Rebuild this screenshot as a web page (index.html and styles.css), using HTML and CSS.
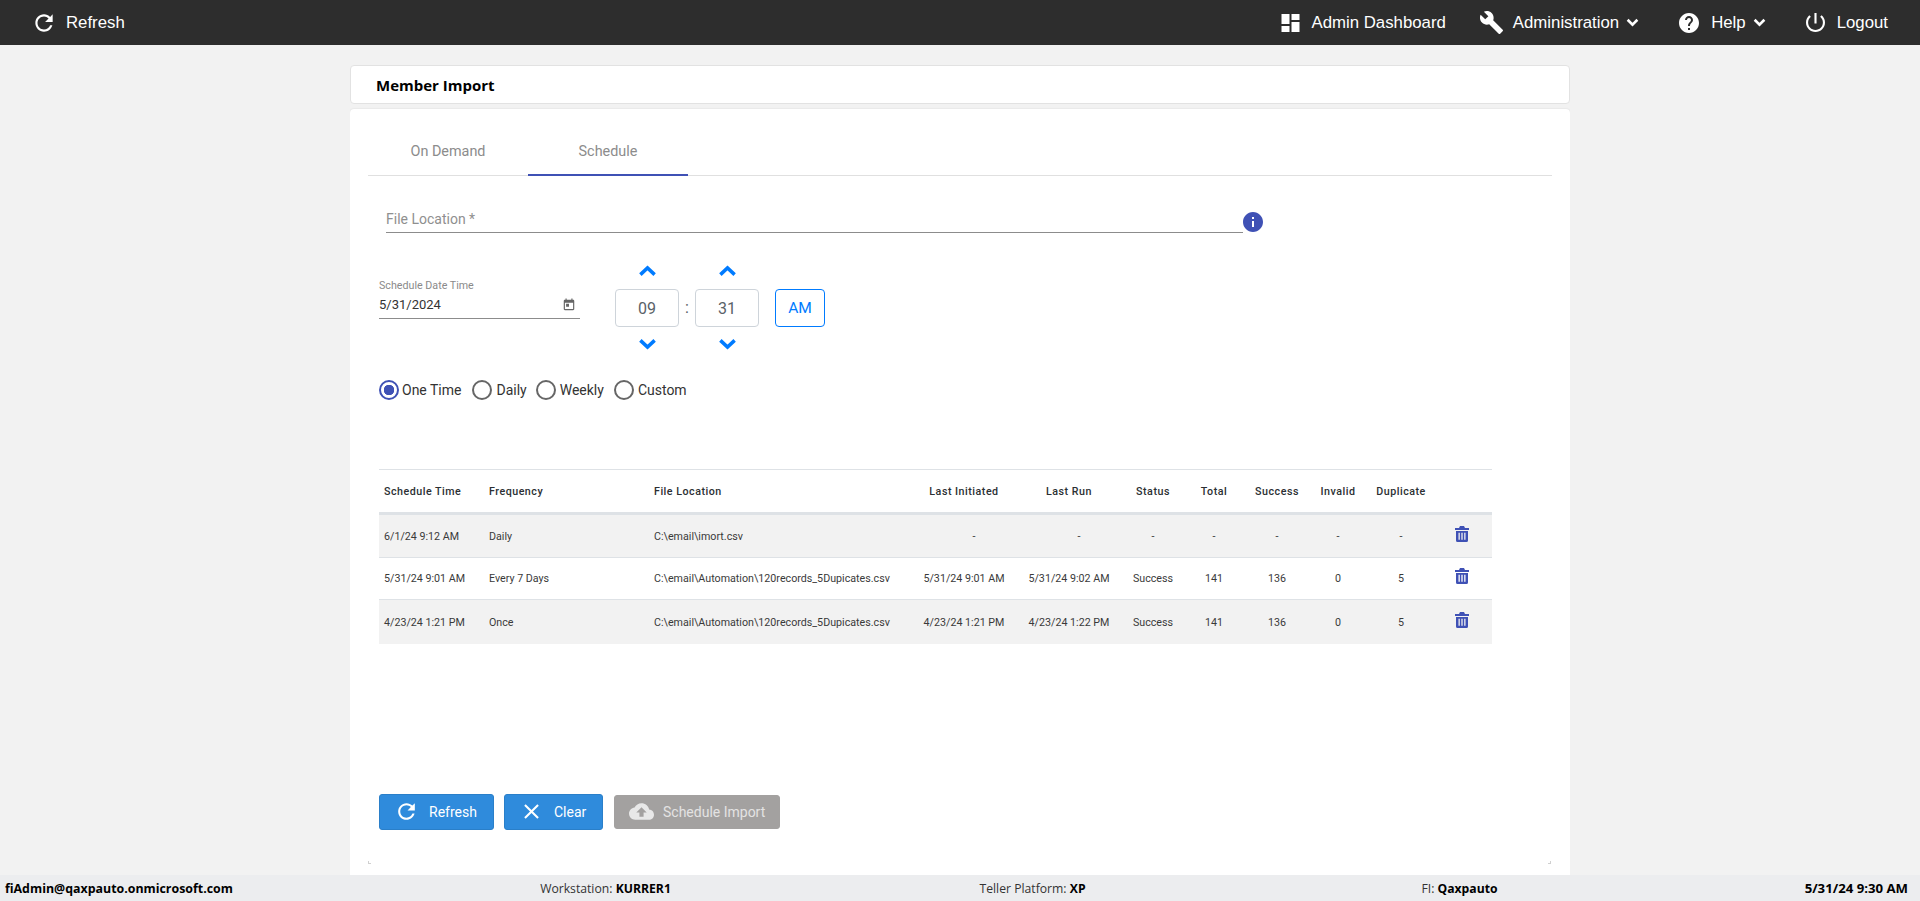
FILE: index.html
```html
<!DOCTYPE html>
<html lang="en">
<head>
<meta charset="utf-8">
<title>Member Import</title>
<link rel="stylesheet" href="styles.css">
</head>
<body>
<header class="topbar">
  <a class="nav-item nav-refresh"><svg class="nav-icon" viewBox="0 0 24 24"><path d="M17.65 6.35C16.2 4.9 14.21 4 12 4c-4.42 0-7.99 3.58-7.99 8s3.57 8 7.99 8c3.73 0 6.84-2.55 7.73-6h-2.08c-.82 2.33-3.04 4-5.65 4-3.31 0-6-2.69-6-6s2.69-6 6-6c1.66 0 3.14.69 4.22 1.78L13 11h7V4l-2.35 2.35z"/></svg><span>Refresh</span></a>
  <nav class="nav-right">
    <a class="nav-item nav-dash"><svg class="nav-icon" viewBox="3 3 18 18"><path d="M3 13h8V3H3v10zm0 8h8v-6H3v6zm10 0h8V11h-8v10zm0-18v6h8V3h-8z"/></svg><span>Admin Dashboard</span></a>
    <a class="nav-item nav-admin"><svg class="nav-icon nav-icon-wrench" viewBox="1 1 22 22"><path d="M22.7 19l-9.1-9.1c.9-2.3.4-5-1.5-6.9-2-2-5-2.4-7.4-1.3L9 6 6 9 1.6 4.7C.4 7.1.9 10.1 2.9 12.1c1.9 1.9 4.6 2.4 6.9 1.5l9.1 9.1c.4.4 1 .4 1.4 0l2.3-2.3c.5-.4.5-1.1.1-1.4z"/></svg><span>Administration</span><svg class="nav-caret" viewBox="0 0 12 8"><path d="M1.5 1.5 6 6l4.5-4.5"/></svg></a>
    <a class="nav-item nav-help"><svg class="nav-icon nav-icon-help" viewBox="2 2 20 20"><path d="M12 2C6.48 2 2 6.48 2 12s4.48 10 10 10 10-4.48 10-10S17.52 2 12 2zm1 17h-2v-2h2v2zm2.07-7.75l-.9.92C13.45 12.9 13 13.5 13 15h-2v-.5c0-1.1.45-2.1 1.17-2.83l1.24-1.26c.37-.36.59-.86.59-1.41 0-1.1-.9-2-2-2s-2 .9-2 2H8c0-2.21 1.79-4 4-4s4 1.79 4 4c0 .88-.36 1.68-.93 2.25z"/></svg><span>Help</span><svg class="nav-caret" viewBox="0 0 12 8"><path d="M1.5 1.5 6 6l4.5-4.5"/></svg></a>
    <a class="nav-item nav-logout"><svg class="nav-icon" viewBox="3 3 18 18"><path d="M13 3h-2v10h2V3zm4.83 2.17l-1.42 1.42C17.99 7.86 19 9.81 19 12c0 3.87-3.13 7-7 7s-7-3.13-7-7c0-2.19 1.01-4.14 2.58-5.42L6.17 5.17C4.23 6.82 3 9.26 3 12c0 4.97 4.03 9 9 9s9-4.03 9-9c0-2.74-1.23-5.18-3.17-6.83z"/></svg><span>Logout</span></a>
  </nav>
</header>

<main class="page">
  <div class="title-card"><h1 class="title">Member Import</h1></div>
  <section class="card">
    <span class="corner corner-left"></span>
    <span class="corner corner-right"></span>
    <div class="tabs">
      <div class="tab">On Demand</div>
      <div class="tab tab-active">Schedule</div>
    </div>

    <div class="file-row">
      <div class="file-field">File Location *</div>
      <svg class="info-icon" viewBox="2 2 20 20"><path d="M12 2C6.48 2 2 6.48 2 12s4.48 10 10 10 10-4.48 10-10S17.52 2 12 2zm1 15h-2v-6h2v6zm0-8h-2V7h2v2z"/></svg>
    </div>

    <div class="schedule-row">
      <div class="date-field">
        <div class="date-label">Schedule Date Time</div>
        <div class="date-value"><span>5/31/2024</span><svg class="cal-icon" viewBox="0 0 24 24"><path d="M19 3h-1V1h-2v2H8V1H6v2H5c-1.11 0-1.99.9-1.99 2L3 19c0 1.1.89 2 2 2h14c1.1 0 2-.9 2-2V5c0-1.1-.9-2-2-2zm0 16H5V8h14v11zM7 10h5v5H7z"/></svg></div>
      </div>
      <div class="time-picker">
        <div class="spinner">
          <svg class="chev" viewBox="0 0 16 10"><path d="M2 8l6-5.500 6 5.500"/></svg>
          <div class="time-box">09</div>
          <svg class="chev" viewBox="0 0 16 10"><path d="M2 2l6 5.500 6-5.500"/></svg>
        </div>
        <div class="time-sep">:</div>
        <div class="spinner">
          <svg class="chev" viewBox="0 0 16 10"><path d="M2 8l6-5.500 6 5.500"/></svg>
          <div class="time-box">31</div>
          <svg class="chev" viewBox="0 0 16 10"><path d="M2 2l6 5.500 6-5.500"/></svg>
        </div>
        <div class="ampm">AM</div>
      </div>
    </div>

    <div class="radios">
      <div class="radio-item radio-item-first"><span class="radio radio-on"></span><span>One Time</span></div>
      <div class="radio-item"><span class="radio"></span><span>Daily</span></div>
      <div class="radio-item"><span class="radio"></span><span>Weekly</span></div>
      <div class="radio-item"><span class="radio"></span><span>Custom</span></div>
    </div>

    <table class="grid">
      <colgroup>
        <col class="c1"><col class="c2"><col class="c3"><col class="c4"><col class="c5"><col class="c6"><col class="c7"><col class="c8"><col class="c9"><col class="c10"><col class="c11">
      </colgroup>
      <thead>
        <tr>
          <th class="left first">Schedule Time</th><th class="left">Frequency</th><th class="left">File Location</th><th>Last Initiated</th><th>Last Run</th><th>Status</th><th>Total</th><th>Success</th><th>Invalid</th><th>Duplicate</th><th></th>
        </tr>
      </thead>
      <tbody>
        <tr class="row-a">
          <td class="left">6/1/24 9:12 AM</td><td class="left">Daily</td><td class="left">C:\email\imort.csv</td><td class="dash-shift">-</td><td class="dash-shift">-</td><td>-</td><td>-</td><td>-</td><td>-</td><td>-</td>
          <td><svg class="trash" viewBox="0 0 14 16"><path fill-rule="evenodd" d="M5 0h4l1 2h4v2H0V2h4zM1 5h12v9.500A1.500 1.500 0 0 1 11.500 16h-9A1.500 1.500 0 0 1 1 14.500zm2.500 1.800v7h1.300v-7zm2.850 0v7h1.300v-7zm2.850 0v7h1.300v-7z"/></svg></td>
        </tr>
        <tr class="row-b">
          <td class="left">5/31/24 9:01 AM</td><td class="left">Every 7 Days</td><td class="left">C:\email\Automation\120records_5Dupicates.csv</td><td>5/31/24 9:01 AM</td><td>5/31/24 9:02 AM</td><td>Success</td><td>141</td><td>136</td><td>0</td><td>5</td>
          <td><svg class="trash" viewBox="0 0 14 16"><path fill-rule="evenodd" d="M5 0h4l1 2h4v2H0V2h4zM1 5h12v9.500A1.500 1.500 0 0 1 11.500 16h-9A1.500 1.500 0 0 1 1 14.500zm2.500 1.800v7h1.300v-7zm2.850 0v7h1.300v-7zm2.850 0v7h1.300v-7z"/></svg></td>
        </tr>
        <tr class="row-c">
          <td class="left">4/23/24 1:21 PM</td><td class="left">Once</td><td class="left">C:\email\Automation\120records_5Dupicates.csv</td><td>4/23/24 1:21 PM</td><td>4/23/24 1:22 PM</td><td>Success</td><td>141</td><td>136</td><td>0</td><td>5</td>
          <td><svg class="trash" viewBox="0 0 14 16"><path fill-rule="evenodd" d="M5 0h4l1 2h4v2H0V2h4zM1 5h12v9.500A1.500 1.500 0 0 1 11.500 16h-9A1.500 1.500 0 0 1 1 14.500zm2.500 1.800v7h1.300v-7zm2.850 0v7h1.300v-7zm2.850 0v7h1.300v-7z"/></svg></td>
        </tr>
      </tbody>
    </table>

    <div class="actions">
      <button class="btn btn-refresh"><svg class="btn-icon" viewBox="0 0 24 24"><path d="M17.65 6.35C16.2 4.9 14.21 4 12 4c-4.420 0-7.990 3.580-7.990 8s3.570 8 7.990 8c3.730 0 6.840-2.550 7.730-6h-2.080c-.82 2.330-3.040 4-5.650 4-3.310 0-6-2.690-6-6s2.690-6 6-6c1.660 0 3.140.69 4.220 1.780L13 11h7V4l-2.350 2.350z"/></svg>Refresh</button>
      <button class="btn btn-clear"><svg class="btn-icon" viewBox="0 0 24 24"><path d="M19 6.410L17.590 5 12 10.590 6.410 5 5 6.410 10.590 12 5 17.590 6.410 19 12 13.410 17.590 19 19 17.590 13.410 12z"/></svg>Clear</button>
      <button class="btn btn-disabled"><svg class="btn-icon btn-icon-cloud" viewBox="0 0 24 24"><path d="M19.350 10.040C18.670 6.590 15.640 4 12 4 9.110 4 6.600 5.640 5.350 8.040 2.340 8.360 0 10.910 0 14c0 3.310 2.690 6 6 6h13c2.760 0 5-2.240 5-5 0-2.640-2.050-4.780-4.650-4.960zM14 13v4h-4v-4H7l5-5 5 5h-3z"/></svg>Schedule Import</button>
    </div>
  </section>
</main>

<footer class="statusbar">
  <div class="st st-left"><b>fiAdmin@qaxpauto.onmicrosoft.com</b></div>
  <div class="st">Workstation: <b>KURRER1</b></div>
  <div class="st">Teller Platform: <b>XP</b></div>
  <div class="st">FI: <b>Qaxpauto</b></div>
  <div class="st st-right"><b>5/31/24 9:30 AM</b></div>
</footer>
</body>
</html>
```

FILE: styles.css
```css
* { box-sizing: border-box; }
html, body { margin: 0; height: 901px; overflow: hidden; }
body {
  display: flex;
  flex-direction: column;
  background: #f2f2f2;
  font-family: Roboto, "Liberation Sans", sans-serif;
  color: #212529;
}

/* top bar */
.topbar {
  flex: none;
  height: 45px;
  background: #2d2d2d;
  color: #fff;
  display: flex;
  align-items: center;
  justify-content: space-between;
  padding: 0 32px 0 35px;
  font-family: "Liberation Sans", Arial, sans-serif;
  font-size: 16.800px;
}
.nav-right { display: flex; align-items: center; }
.nav-item { display: flex; align-items: center; }
.nav-icon { width: 18px; height: 18px; fill: #fff; margin-right: 13px; }
.nav-refresh .nav-icon { width: 26px; height: 26px; margin-right: 9px; margin-left: -4px; }
.nav-dash { margin-right: 34px; }
.nav-dash .nav-icon { width: 19px; height: 18px; margin-right: 12px; }
.nav-admin { margin-right: 40px; }
.nav-icon-wrench { width: 23px; height: 23px; margin-right: 10px; }
.nav-help { margin-right: 40px; }
.nav-icon-help { width: 20px; height: 20px; margin-right: 12px; }
.nav-logout .nav-icon { width: 19px; height: 19px; margin-right: 12px; }
.nav-caret { width: 13px; height: 9px; margin-left: 7px; fill: none; stroke: #fff; stroke-width: 2.400; }

/* page column */
.page {
  flex: 1;
  min-height: 0;
  width: 1220px;
  margin: 0 auto;
  padding-top: 20px;
  overflow: hidden;
}
.title-card {
  height: 39px;
  background: #fff;
  border: 1px solid #e2e2e2;
  border-radius: 4px;
  display: flex;
  align-items: center;
  padding-left: 25px;
}
.title {
  margin: 0;
  font-family: "Open Sans", sans-serif;
  font-size: 15px;
  font-weight: 700;
  color: #000;
}
.card {
  position: relative;
  margin-top: 5px;
  height: 780px;
  background: #fff;
  border-radius: 4px 4px 0 0;
  box-shadow: 0 0 2px rgba(0,0,0,.12);
  padding: 0 18px;
}
.corner {
  position: absolute;
  top: 752px;
  width: 3px;
  height: 3px;
  border-bottom: 1px solid #d0d0d0;
}
.corner-left { left: 18px; border-left: 1px solid #d0d0d0; }
.corner-right { right: 19px; border-right: 1px solid #d0d0d0; }

/* tabs */
.tabs {
  display: flex;
  height: 67px;
  padding-top: 18px;
  border-bottom: 1px solid #e0e0e0;
}
.tab {
  width: 160px;
  height: 48px;
  display: flex;
  align-items: center;
  justify-content: center;
  font-size: 14.400px;
  color: #8c8c8c;
}
.tab-active { border-bottom: 2px solid #3f51b5; height: 49px; padding-top: 1px; }

/* file location */
.file-row { display: flex; align-items: center; margin: 25px 0 0 18px; }
.file-field {
  width: 857px;
  height: 32px;
  border-bottom: 1px solid #8c8c8c;
  font-size: 14px;
  color: #8f8f8f;
  padding-top: 9px;
  line-height: 18px;
}
.info-icon { width: 20px; height: 20px; fill: #3f51b5; margin-top: 9px; }

/* date and time */
.schedule-row { display: flex; margin: 29px 0 0 11px; }
.date-field { width: 201px; height: 48px; margin-top: 9px; border-bottom: 1px solid #8c8c8c; }
.date-label { font-size: 10.700px; color: #8a8a8a; line-height: 13px; padding-top: 8px; height: 22px; }
.date-value {
  display: flex;
  align-items: center;
  justify-content: space-between;
  font-size: 13px;
  line-height: 20px;
  color: #333;
  padding-right: 4px;
  margin-top: 2px;
}
.cal-icon { width: 14px; height: 14px; fill: #666; }
.time-picker { display: flex; margin-left: 35px; align-items: center; padding-top: 3px; }
.spinner { display: flex; flex-direction: column; align-items: center; width: 64px; }
.chev { width: 19px; height: 12px; fill: none; stroke: #007bff; stroke-width: 3; margin-left: 1px; }
.time-box {
  width: 64px;
  height: 38px;
  margin: 12px 0 11px;
  border: 1px solid #ced4da;
  border-radius: 4px;
  display: flex;
  align-items: center;
  justify-content: center;
  font-size: 16px;
  color: #5a6268;
}
.time-sep { width: 16px; text-align: center; font-size: 16px; color: #5a6268; }
.ampm {
  width: 50px;
  height: 38px;
  margin-left: 16px;
  border: 1px solid #007bff;
  border-radius: 4px;
  display: flex;
  align-items: center;
  justify-content: center;
  font-size: 15.500px;
  color: #007bff;
}

/* radios */
.radios { display: flex; margin: 30px 0 0 11px; font-size: 14px; color: #333; }
.radio-item { display: flex; align-items: center; margin-right: 10px; }
.radio-item-first { margin-right: 11px; }
.radio-item-first + .radio-item { margin-right: 9px; }
.radio {
  width: 20px;
  height: 20px;
  border: 2px solid #666;
  border-radius: 50%;
  margin-right: 4px;
}
.radio-on {
  border-color: #3f51b5;
  margin-right: 3px;
  background: radial-gradient(circle, #3f51b5 0 5px, #fff 5.500px);
}

/* table */
.grid {
  margin: 69px 0 0 11px;
  width: 1113px;
  table-layout: fixed;
  border-collapse: collapse;
  font-size: 10.700px;
  color: #3a3a3a;
}
.c1 { width: 105px; }
.c2 { width: 165px; }
.c3 { width: 263px; }
.c4 { width: 104px; }
.c5 { width: 106px; }
.c6 { width: 62px; }
.c7 { width: 60px; }
.c8 { width: 66px; }
.c9 { width: 56px; }
.c10 { width: 70px; }
.c11 { width: 56px; }
.grid th {
  height: 44px;
  font-weight: 500;
  letter-spacing: .5px;
  color: #2b2f33;
  border-top: 1px solid #dee2e6;
  border-bottom: 3px solid #dee2e6;
  text-align: center;
  padding: 0;
}
.grid td { text-align: center; padding: 0; border-bottom: 1px solid #dee2e6; }
.grid .left { text-align: left; padding-left: 5px; }
.grid .first { padding-left: 5px; }
.grid .dash-shift { padding-left: 20px; }
.row-a td { height: 44px; background: #f2f2f2; }
.row-b td { height: 42px; }
.row-c td { height: 44px; background: #f2f2f2; border-bottom: 0; padding-top: 1px; }
.trash { width: 14px; height: 16px; fill: #3f51b5; position: relative; top: -1px; left: -2px; }

/* buttons */
.actions { display: flex; margin: 150px 0 0 11px; align-items: center; }
.btn {
  height: 36px;
  display: flex;
  align-items: center;
  border: 1px solid #2a7fc9;
  border-radius: 3px;
  background: #2f8bdc;
  color: #fff;
  font-family: Roboto, sans-serif;
  font-size: 14px;
  padding: 0;
}
.btn-icon { width: 25px; height: 25px; fill: #fff; }
.btn-refresh { width: 115px; padding-left: 14px; }
.btn-refresh .btn-icon { margin-right: 10px; }
.btn-clear { width: 99px; margin-left: 10px; padding-left: 14px; }
.btn-clear .btn-icon { margin-right: 10px; }
.btn-disabled {
  width: 166px;
  height: 34px;
  margin-left: 11px;
  padding-left: 14px;
  background: #a3a1a0;
  border-color: #a3a1a0;
  color: #e3e3e3;
}
.btn-icon-cloud { fill: #e8e8e8; margin-right: 9px; }

/* footer */
.statusbar {
  flex: none;
  height: 26px;
  background: #ecedef;
  display: grid;
  grid-template-columns: 392px 427px 427px 427px 1fr;
  align-items: center;
  font-family: "Open Sans", sans-serif;
  font-size: 12.200px;
  color: #333;
}
.statusbar b { color: #000; font-weight: 700; }
.st { text-align: center; white-space: nowrap; }
.st-left { text-align: left; padding-left: 5px; font-size: 12.400px; }
.st-right { text-align: right; padding-right: 12px; font-size: 13.200px; }
```
